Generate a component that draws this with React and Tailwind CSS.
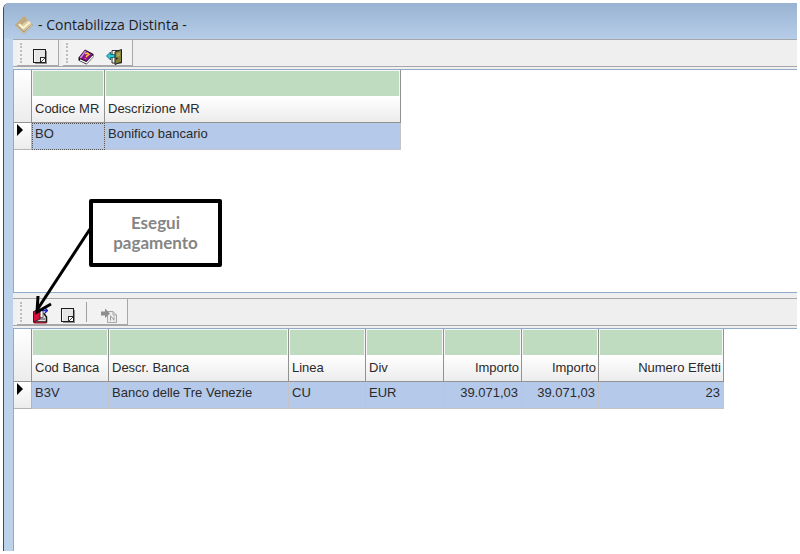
import React from 'react';

const metodi = {
    columns: [
        { label: 'Codice MR', width: 'w-[73px]' },
        { label: 'Descrizione MR', width: 'w-[296px]' },
    ],
    row: ['BO', 'Bonifico bancario'],
};

const banche = {
    columns: [
        { label: 'Cod Banca', width: 'w-[77px]' },
        { label: 'Descr. Banca', width: 'w-[180px]' },
        { label: 'Linea', width: 'w-[77px]' },
        { label: 'Div', width: 'w-[78px]' },
        { label: 'Importo', width: 'w-[78px]', right: true },
        { label: 'Importo', width: 'w-[77px]', right: true },
        { label: 'Numero Effetti', width: 'w-[125px]', right: true },
    ],
    row: ['B3V', 'Banco delle Tre Venezie', 'CU', 'EUR', '39.071,03', '39.071,03', '23'],
};

const AppIcon = () => (
    <svg width="20" height="20" viewBox="0 0 20 20" aria-hidden="true">
        <path d="M10 1 L19 10 L10 19 L1 10 Z" fill="#a99c86" />
        <path d="M10 1 L18 9 L10 16 L2 9 Z" fill="#d8cba6" />
        <path d="M10 1 L14 5 L6 11 L2 9 Z" fill="#bfa981" />
        <path d="M5 9 L9 13 L16 7" fill="none" stroke="#fbf3cf" strokeWidth="2" />
        <path d="M2 11 L10 18 L18 10" fill="none" stroke="#dcc58a" strokeWidth="1" />
    </svg>
);

const PageIcon = () => (
    <svg width="16" height="17" viewBox="0 0 16 17" shapeRendering="crispEdges" aria-hidden="true">
        <path d="M3 15h12v1H3zM14 3h1v13h-1z" fill="#8f8f8f" />
        <rect x="1" y="1" width="13" height="14" fill="#1d1d1d" />
        <rect x="2" y="2" width="11" height="12" fill="#e6e6e6" />
        <rect x="2" y="2" width="1" height="12" fill="#fafafa" />
        <path d="M8 9h5v1H9v4H8z" fill="#2a2a2a" />
        <rect x="9" y="10" width="4" height="4" fill="#fff" />
        <path d="M12 10h1v1h-1zM11 11h1v1h-1zM10 12h1v1h-1zM9 13h1v1H9z" fill="#444" />
    </svg>
);

const BookIcon = () => (
    <svg width="16" height="16" viewBox="0 0 16 16" aria-hidden="true">
        <path d="M7 0.500 L15.500 5 V8 L8.500 15.500 L0.500 11.500 V8.500 Z" fill="#1b0b1f" />
        <path d="M2 10.800 L8.500 14 L15 7" fill="none" stroke="#f4f4f4" strokeWidth="1.400" />
        <path d="M7 1.500 L14.500 5.500 L8.500 12 L1.500 8.700 Z" fill="#8a1290" />
        <path d="M7 1.500 L1.500 8.700 L3 9.400 L8.300 2.200 Z" fill="#d28bd8" />
        <path d="M7.200 4.800 L9.300 4 L11 5.500 L8.800 7 L8.300 8.200 M7.600 9.300 L7.200 10" fill="none" stroke="#ffd02a" strokeWidth="1.500" />
    </svg>
);

const DoorIcon = () => (
    <svg width="17" height="17" viewBox="0 0 17 17" aria-hidden="true">
        <path d="M6 2.500 H15.500 V15 H6 Z" fill="#f4f4e8" stroke="#333" strokeWidth="1" />
        <path d="M9 4 L15.500 1.500 V14 L9 16.500 Z" fill="#85823c" stroke="#222" strokeWidth="1" />
        <path d="M10.500 5.500 L14 4.200 V8 L10.500 9 Z" fill="#a9a55a" />
        <path d="M10 10.500 h1.500" stroke="#111" strokeWidth="1.500" />
        <path d="M0.500 8 L4.500 4 V6.500 H8.500 V9.500 H4.500 V12 Z" fill="#20cfdc" stroke="#0d5560" strokeWidth="0.800" />
    </svg>
);

const PayIcon = () => (
    <svg width="16" height="17" viewBox="0 0 16 17" aria-hidden="true">
        <path d="M6 6.500 L12 6.500 L14.500 10 V15 H2 V8 Z" fill="#dedede" stroke="#151515" strokeWidth="1.500" />
        <path d="M6 3.500 H11 V10.500 H6 Z" fill="#fafafa" stroke="#666" strokeWidth="1" />
        <path d="M8 12 h5" stroke="#444" />
        <path d="M2 15.800 H14.500" stroke="#a31226" strokeWidth="1.400" />
        <path d="M1.500 4.500 L8 2 V12 L1.500 15 Z" fill="#d8103c" stroke="#5d0a20" strokeWidth="1" />
        <path d="M10 3.500 h5.500 M13 1 L15.500 3.500 L13 6" fill="none" stroke="#1c22c4" strokeWidth="1.400" />
    </svg>
);

const ExportIcon = () => (
    <svg width="17" height="16" viewBox="0 0 17 16" aria-hidden="true">
        <path d="M6.500 3.500 H12 L15.500 7 V14.500 H6.500 Z" fill="#ececec" stroke="#a6a6a6" />
        <path d="M12 3.500 V7 H15.500" fill="none" stroke="#a6a6a6" />
        <path d="M9.500 7.500 V12.500 M9.500 8 L13 12 M13 8.500 V12.500" fill="none" stroke="#a0a0a0" strokeWidth="1" />
        <path d="M0 3.500 H4 V0.500 L9 5.500 L4 10 V7.500 H0 Z" fill="#8e8e8e" />
    </svg>
);

const ToolButton = ({ label, disabled, children }) => (
    <button type="button" aria-label={label} disabled={disabled} className="flex h-6 w-7 items-end justify-center">
        {children}
    </button>
);

const ToolGroup = ({ children }) => (
    <div className="flex items-center border-r border-b border-[#a8a8a8] bg-[#f2f2f2] pr-1 pl-[3px]">
        <span className="mr-1 h-5 w-0 border-l-2 border-dotted border-[#bdbdbd]" />
        {children}
    </div>
);

const Toolbar = ({ children }) => (
    <div className="flex h-7 gap-1 border-y border-[#a5a7aa] bg-[#efefef] pl-1">{children}</div>
);

const Grid = ({ name, columns, row }) => (
    <table aria-label={name} className="w-px table-fixed border-separate border-spacing-0 text-[13px] leading-4 text-[#2b2b2b]">
        <colgroup>
            <col className="w-[18px]" />
            {columns.map((col, i) => (
                <col key={i} className={col.width} />
            ))}
        </colgroup>
        <thead>
            <tr>
                <td className="h-[53px] border-r border-b border-[#929292] bg-linear-to-b from-white to-[#ececec] p-0"></td>
                {columns.map((col, i) => (
                    <th key={i} className="h-[53px] border-r border-b border-[#929292] bg-[#f6f6f6] p-0 align-top font-normal">
                        <div className="mx-px mt-px h-[25px] bg-[#bfdcc0]"></div>
                        <div className={`h-[26px] bg-linear-to-b from-white to-[#ececec] px-[3px] pt-[5px] whitespace-nowrap ${col.right ? 'pr-[2px] text-right' : 'text-left'}`}>
                            {col.label}
                        </div>
                    </th>
                ))}
            </tr>
        </thead>
        <tbody>
            <tr>
                <td className="h-[27px] border-r border-b border-[#b5b5b5] bg-linear-to-b from-white to-[#ececec] p-0 align-top">
                    <svg width="8" height="12" viewBox="0 0 8 12" className="ml-[2px] mt-px" aria-hidden="true">
                        <path d="M1 0 L7 6 L1 12 Z" fill="#000" />
                    </svg>
                </td>
                {row.map((value, i) => (
                    <td key={i} className={`h-[27px] border-r border-b border-[#c3c3c8] bg-[#b5c9ea] px-[3px] pt-[3px] align-top whitespace-nowrap ${columns[i].right ? 'text-right' : ''} ${name === 'Metodi' && i === 0 ? 'outline-1 -outline-offset-1 outline-dotted outline-[#555]' : ''}`}>
                        {value}
                    </td>
                ))}
            </tr>
        </tbody>
    </table>
);

const Callout = () => (
    <>
        <div className="absolute top-[129px] left-[75px] flex h-[68px] w-[133px] items-center justify-center rounded-xs border-4 border-black bg-white text-center font-['Lato',sans-serif] text-[17px] leading-5 font-bold text-[#858585]">
            Esegui
            <br />
            pagamento
        </div>
        <svg width="64" height="92" viewBox="0 0 64 92" className="absolute top-[156px] left-4" aria-hidden="true">
            <path d="M60 3 L7 84" stroke="#000" strokeWidth="3" />
            <path d="M8 70 L7 86 L21 78" fill="none" stroke="#000" strokeWidth="3" />
        </svg>
    </>
);

const App = () => {
    return (
        <div className="h-screen bg-white p-[3px] font-['Liberation_Sans',Arial,sans-serif]">
            <div className="flex h-full flex-col rounded-tl-md border-l border-[#4a4a4a] bg-[#bcd1ea]">
                <header className="flex h-9 items-center gap-1 rounded-tl-md bg-linear-to-b from-[#98b3d2] to-[#b6cde8] pt-2 pl-[10px]">
                    <AppIcon />
                    <h1 className="font-['Open_Sans',sans-serif] text-[14px] leading-5 text-[#1d1d1d]">- Contabilizza Distinta -</h1>
                </header>

                <main className="ml-[9px] flex min-h-0 flex-1 flex-col bg-[#efefef]">
                    <Toolbar>
                        <ToolGroup>
                            <ToolButton label="Nuovo"><PageIcon /></ToolButton>
                        </ToolGroup>
                        <ToolGroup>
                            <ToolButton label="Guida"><BookIcon /></ToolButton>
                            <ToolButton label="Esci"><DoorIcon /></ToolButton>
                        </ToolGroup>
                    </Toolbar>

                    <section className="relative mt-[2px] min-h-0 flex-1 border border-r-0 border-[#8fabc9] bg-white">
                        <Grid name="Metodi" columns={metodi.columns} row={metodi.row} />
                        <Callout />
                    </section>

                    <div className="mt-[5px]">
                        <Toolbar>
                            <ToolGroup>
                                <ToolButton label="Esegui pagamento"><PayIcon /></ToolButton>
                                <ToolButton label="Dettaglio"><PageIcon /></ToolButton>
                                <span className="mr-2 ml-1 h-5 w-px bg-[#a0a0a0]" />
                                <ToolButton label="Esporta" disabled><ExportIcon /></ToolButton>
                            </ToolGroup>
                        </Toolbar>
                    </div>

                    <section className="mt-[2px] min-h-0 flex-1 border-t border-l border-[#8fabc9] bg-white">
                        <Grid name="Banche" columns={banche.columns} row={banche.row} />
                    </section>
                </main>
            </div>
        </div>
    );
};

export default App;
